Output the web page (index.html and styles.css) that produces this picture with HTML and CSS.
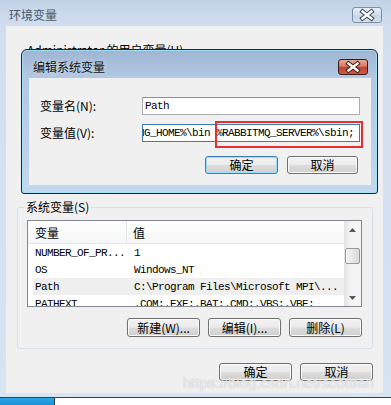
FILE: index.html
```html
<!DOCTYPE html>
<html lang="zh-CN">
<head>
<meta charset="utf-8">
<title>环境变量</title>
<link rel="stylesheet" href="styles.css">
</head>
<body>
<div class="screen">
  <div class="window">
    <div class="titlebar">
      <span class="title">环境变量</span>
      <span class="close close-inactive">
        <svg width="28" height="14" viewBox="0 0 28 14"><path d="M9.5 3.5 L18.5 10.5 M18.5 3.5 L9.5 10.5" stroke="#3a4858" stroke-width="4.4" stroke-linecap="square"/><path d="M9.5 3.5 L18.5 10.5 M18.5 3.5 L9.5 10.5" stroke="#ffffff" stroke-width="2.4" stroke-linecap="square"/></svg>
      </span>
    </div>
    <div class="client">
      <div class="user-group"><span class="group-text">Administrator 的用户变量(U)</span></div>
      <div class="group">
        <div class="legend">系统变量(S)</div>
        <div class="list">
          <div class="table">
            <div class="list-head"><span class="hcell first">变量</span><span class="hcell">值</span></div>
            <div class="row"><span>NUMBER_OF_PR...</span><span>1</span></div>
            <div class="row"><span>OS</span><span>Windows_NT</span></div>
            <div class="row selected"><span>Path</span><span>C:\Program Files\Microsoft MPI\...</span></div>
            <div class="row"><span>PATHEXT</span><span>.COM;.EXE;.BAT;.CMD;.VBS;.VBE;</span></div>
          </div>
          <div class="vscroll">
            <div class="arrow"><svg width="7" height="4" viewBox="0 0 7 4"><path d="M0 4 L3.5 0 L7 4 Z" fill="#4e5866"/></svg></div>
            <div class="track"><div class="thumb"></div></div>
            <div class="arrow"><svg width="7" height="4" viewBox="0 0 7 4"><path d="M0 0 L7 0 L3.5 4 Z" fill="#4e5866"/></svg></div>
          </div>
        </div>
        <div class="btn-row group-btns">
          <button class="btn">新建(W)...</button>
          <button class="btn">编辑(I)...</button>
          <button class="btn">删除(L)</button>
        </div>
      </div>
      <div class="btn-row footer">
        <button class="btn short">确定</button>
        <button class="btn short">取消</button>
      </div>
    </div>
  </div>
  <div class="taskbar"><div class="task-item"></div></div>

  <div class="edit-dialog">
    <div class="dlg-titlebar">
      <span class="dlg-title">编辑系统变量</span>
      <span class="close close-active">
        <svg width="28" height="14" viewBox="0 0 28 14"><path d="M9.5 3.5 L18.5 10.5 M18.5 3.5 L9.5 10.5" stroke="#4a1810" stroke-width="4.4" stroke-linecap="square"/><path d="M9.5 3.5 L18.5 10.5 M18.5 3.5 L9.5 10.5" stroke="#ffffff" stroke-width="2.4" stroke-linecap="square"/></svg>
      </span>
    </div>
    <div class="dlg-client">
      <div class="field">
        <span class="label">变量名(N):</span>
        <div class="textbox"><span class="mono">Path</span></div>
      </div>
      <div class="field second">
        <span class="label">变量值(V):</span>
        <div class="value-wrap">
          <div class="textbox focused"><span class="mono scrolled">NG_HOME%\bin %RABBITMQ_SERVER%\sbin;</span></div>
          <div class="mark"></div>
        </div>
      </div>
      <div class="btn-row dlg-btns">
        <button class="btn short default">确定</button>
        <button class="btn short narrow">取消</button>
      </div>
    </div>
  </div>

  <div class="watermark">https://blog.csdn.net/scottfan</div>
</div>
</body>
</html>
```
FILE: styles.css
```css
* { box-sizing: border-box; }
html, body { margin: 0; padding: 0; }
body {
  width: 391px;
  height: 405px;
  overflow: hidden;
  background: #ffffff;
  font-family: "Noto Sans CJK SC", "Liberation Sans", sans-serif;
  font-size: 12px;
  color: #000;
}
.screen { position: relative; width: 391px; height: 405px; }

/* outer window */
.window {
  height: 398px;
  background: linear-gradient(180deg, #c2d2e6 0px, #d0deef 26px, #d7e4f2 100%);
  border-bottom: 1px solid #2e4256;
}
.titlebar {
  height: 26px;
  display: flex;
  align-items: flex-start;
  padding-left: 9px;
}
.title {
  margin-top: 8px;
  line-height: 14px;
  font-size: 12px;
  color: #4c5866;
}
.close {
  margin-left: auto;
  width: 30px;
  height: 16px;
  border-radius: 3px;
  display: flex;
  align-items: center;
  justify-content: center;
}
.close-inactive {
  margin-top: 7px;
  margin-right: 9px;
  border: 1px solid #7f90a4;
  background: linear-gradient(180deg, #e6edf6 0%, #d3dfec 50%, #c6d4e4 51%, #d2deeb 100%);
}
.client {
  height: 367px;
  margin: 0 8px 0 6px;
  background: #f0f0f0;
  padding: 15px 10px 0 11px;
  display: flex;
  flex-direction: column;
}
.user-group { height: 166px; padding: 3px 0 0 10px; }
.group-text { display: block; line-height: 12px; }

.group {
  border: 1px solid #d5dfe5;
  border-radius: 3px;
  padding: 0 10px 11px 9px;
}
.legend {
  width: fit-content;
  margin: -7px 0 0 -3px;
  padding: 0 2px;
  line-height: 12px;
  background: #f0f0f0;
}
.list {
  margin-top: 7px;
  height: 87px;
  border: 1px solid #828790;
  background: #fff;
  display: flex;
  overflow: hidden;
}
.table { flex: 1; overflow: hidden; }
.list-head {
  height: 23px;
  display: grid;
  grid-template-columns: 99px 1fr;
  background: linear-gradient(180deg, #ffffff 0%, #f5f6f7 100%);
  border-bottom: 1px solid #e5e5e5;
}
.hcell {
  line-height: 14px;
  padding: 5px 0 0 6px;
}
.hcell.first { padding-left: 7px; border-right: 1px solid #e3e4e6; }
.row {
  height: 17px;
  margin-left: 5px;
  padding-left: 2px;
  display: grid;
  grid-template-columns: 99px 1fr;
  align-items: center;
  font-family: "Liberation Mono", monospace;
  font-size: 11px;
  letter-spacing: -0.6px;
  white-space: nowrap;
  overflow: hidden;
}
.row.selected { background: #efefef; }
.vscroll {
  width: 17px;
  display: flex;
  flex-direction: column;
  background: linear-gradient(90deg, #e3e3e3 0%, #f4f4f4 40%, #f4f4f4 100%);
}
.arrow {
  height: 17px;
  display: flex;
  align-items: center;
  justify-content: center;
}
.track { flex: 1; padding: 10px 1px 0 1px; }
.thumb {
  height: 16px;
  border: 1px solid #9a9a9a;
  border-radius: 2px;
  background: linear-gradient(90deg, #f4f4f4 0%, #e8e8e8 50%, #d9d9d9 100%);
}

.btn-row { display: flex; justify-content: flex-end; }
.group-btns { margin-top: 11px; gap: 8px; }
.footer { margin-top: 14px; gap: 8px; }

.btn {
  width: 73px;
  height: 19px;
  padding: 0;
  margin: 0;
  font-family: "Noto Sans CJK SC", "Liberation Sans", sans-serif;
  font-size: 12px;
  line-height: 14px;
  color: #000;
  border: 1px solid #707070;
  border-radius: 3px;
  background: linear-gradient(180deg, #f2f2f2 0%, #ebebeb 48%, #dddddd 52%, #cfcfcf 100%);
  box-shadow: inset 0 0 0 1px #fbfbfb;
}
.btn.short { height: 18px; }
.btn.narrow { width: 71px; }
.btn.default {
  border-color: #3c7fb1;
  box-shadow: inset 0 0 0 1px #9fdcf8;
}

.taskbar { height: 7px; background: #ffffff; }
.task-item {
  width: 55px;
  height: 7px;
  background: linear-gradient(180deg, #2aa6e6 0%, #1b92d6 100%);
  border-right: 1px solid #28384a;
}

/* edit dialog overlay */
.edit-dialog {
  position: absolute;
  left: 21px;
  top: 49px;
  width: 357px;
  height: 145px;
  border: 1px solid #1b2533;
  border-radius: 6px 6px 3px 3px;
  background: linear-gradient(180deg, #9fb6d3 0px, #b3c8e2 28px, #c3d8ee 100%);
  box-shadow: inset 0 0 0 1px rgba(160, 230, 255, 0.75);
  padding: 0 6px 8px 7px;
  display: flex;
  flex-direction: column;
}
.dlg-titlebar {
  height: 28px;
  display: flex;
  align-items: flex-start;
  padding-left: 4px;
}
.dlg-title {
  margin-top: 10px;
  line-height: 14px;
  font-size: 12px;
  color: #111;
  text-shadow: 0 0 4px rgba(255, 255, 255, 0.6);
}
.close-active {
  margin-top: 9px;
  margin-right: 3px;
  border: 1px solid #3f1b16;
  background: linear-gradient(180deg, #e8a898 0%, #d77a68 45%, #c2432f 52%, #cc5a42 100%);
}
.dlg-client {
  flex: 1;
  background: #f0f0f0;
  padding: 19px 10px 0 11px;
}
.field {
  height: 18px;
  display: grid;
  grid-template-columns: 102px 218px;
  align-items: center;
}
.field.second { margin-top: 9px; }
.label { line-height: 14px; }
.value-wrap { position: relative; height: 18px; }
.textbox {
  height: 18px;
  border: 1px solid #abadb3;
  border-top-color: #8e9097;
  background: #fff;
  padding-left: 2px;
  overflow: hidden;
  white-space: nowrap;
  display: flex;
  align-items: center;
}
.textbox.focused { border-color: #3d7bad; }
.mono {
  font-family: "Liberation Mono", monospace;
  font-size: 11px;
  letter-spacing: -0.6px;
  line-height: 14px;
}
.scrolled { margin-left: -7px; flex-shrink: 0; }
.mark {
  position: absolute;
  left: 73px;
  top: -3px;
  width: 148px;
  height: 27px;
  border: 2px solid #e5302f;
}
.dlg-btns { margin-top: 14px; gap: 9px; padding-right: 3px; }

.watermark {
  position: absolute;
  left: 183px;
  top: 375px;
  font-family: "Liberation Sans", Arial, sans-serif;
  font-size: 15px;
  line-height: 16px;
  color: rgba(255, 255, 255, 0.72);
  text-shadow: 0 0 1px rgba(90, 90, 90, 0.45);
  white-space: nowrap;
}
```
